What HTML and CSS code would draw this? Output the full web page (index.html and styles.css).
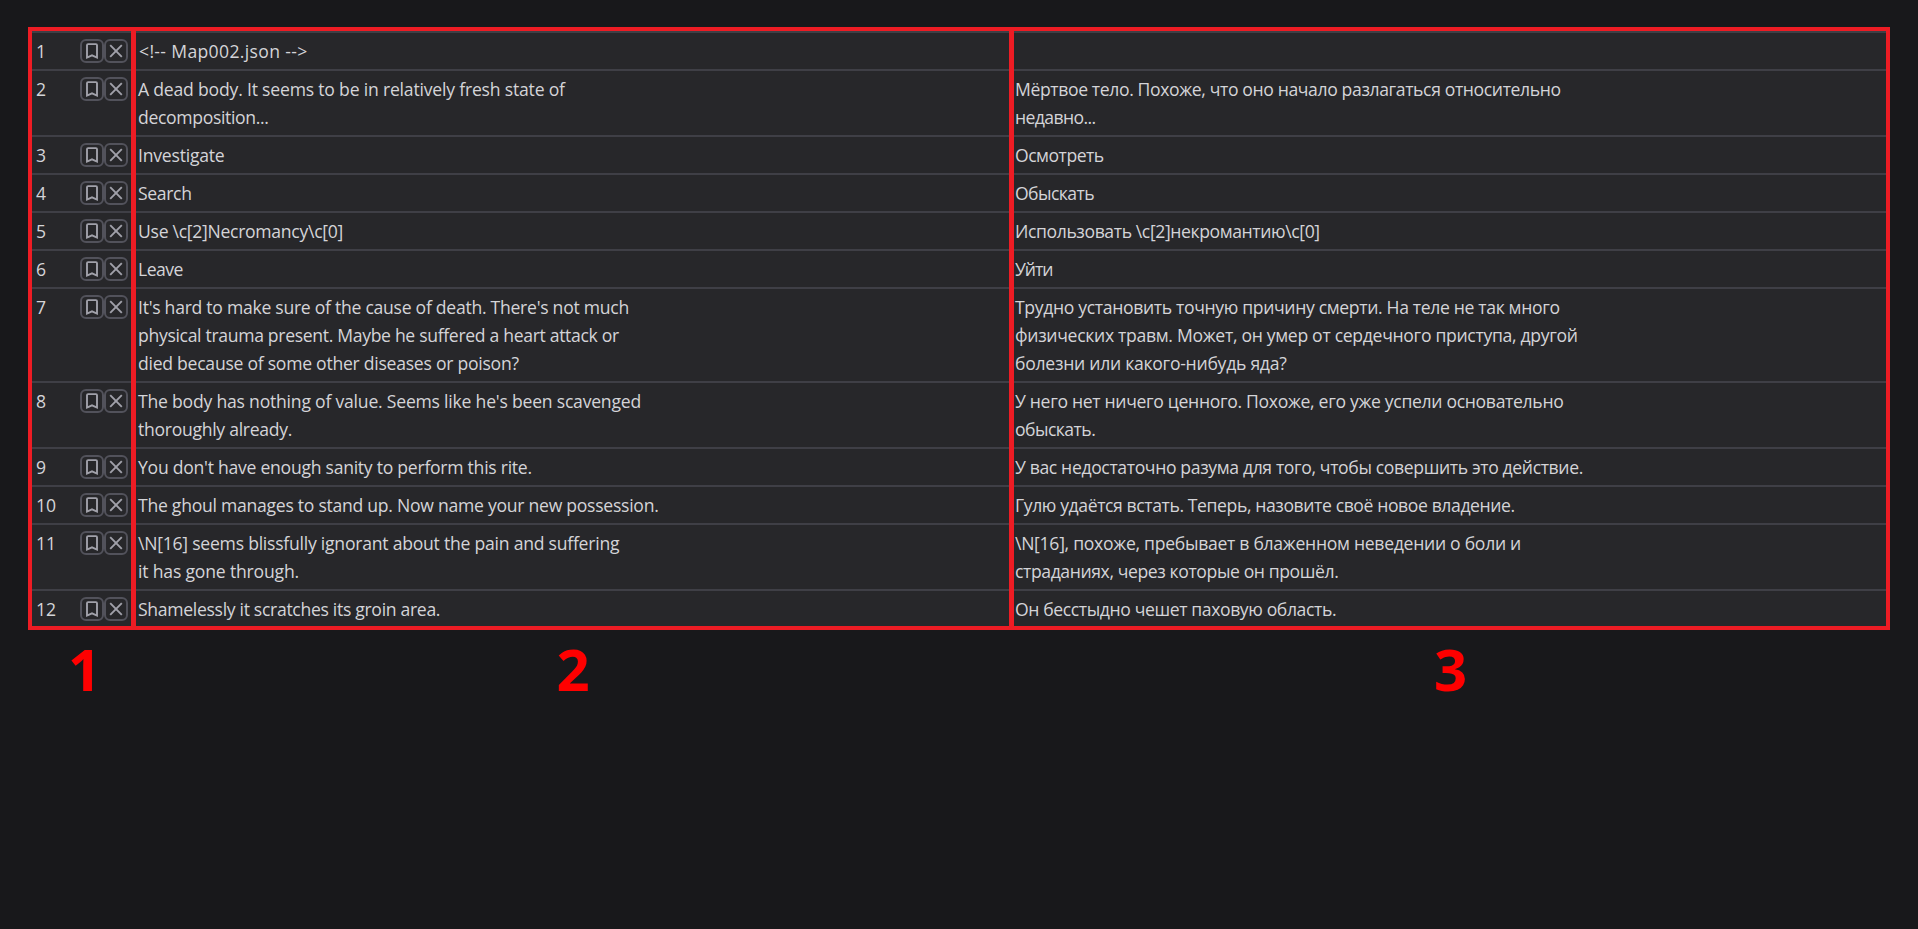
FILE: index.html
```html
<!DOCTYPE html>
<html lang="en">
<head>
<meta charset="utf-8">
<title>Map002</title>
<link rel="stylesheet" href="styles.css">
</head>
<body>
<main class="table" id="table"></main>
<footer class="legend"><span>1</span><span>2</span><span>3</span></footer>
<script src="rows.js"></script>
</body>
</html>
```
FILE: styles.css
```css
body {
  margin: 0;
  padding: 27px 28px 0;
  background: #18181b;
  color: #d4d4d8;
  font-family: "Open Sans", "Noto Sans", sans-serif;
}

.table {
  box-sizing: border-box;
  height: 603px;
  overflow: hidden;
  border: 4px solid #ed1c24;
  background: #27272a;
}

.row,
.legend {
  display: grid;
  grid-template-columns: 99px 878px 877px;
}

.cell {
  box-shadow: inset 0 2px #3f3f46;
  padding: 6px 0 4px 2px;
  font-size: 17.6px;
  line-height: 28px;
}

.cell + .cell {
  border-left: 5px solid #ed1c24;
}

.cell:last-child {
  padding-left: 1px;
}

.row:first-child .cell + .cell {
  padding-left: 3px;
}

.cell.meta {
  display: flex;
  align-items: flex-start;
  padding: 6px 3px 4px 4px;
}

.num {
  flex: 1;
}

.button {
  box-sizing: border-box;
  width: 24px;
  height: 24px;
  margin-top: 2px;
  padding: 0;
  border: 2px solid #52525b;
  border-radius: 6px;
  background: none;
  display: flex;
  align-items: center;
  justify-content: center;
}

.icon {
  display: block;
  width: 20px;
  height: 20px;
  fill: none;
  stroke: #a1a1aa;
  stroke-width: 1.9;
}

.line {
  display: block;
  width: max-content;
  white-space: pre;
}

.legend {
  padding: 0 1px 0 7px;
  color: #f00;
  font-size: 58px;
  font-weight: 700;
  line-height: 78px;
  text-align: center;
}
```
FILE: rows.js
```
// Each line: [text, drawn width in px]
const rows = [
  [[["<!-- Map002.json -->", 168.2]], []],
  [[["A dead body. It seems to be in relatively fresh state of", 427], ["decomposition...", 131]],
   [["Мёртвое тело. Похоже, что оно начало разлагаться относительно", 546.1], ["недавно...", 81.2]]],
  [[["Investigate", 86.7]], [["Осмотреть", 89.2]]],
  [[["Search", 54]], [["Обыскать", 79.7]]],
  [[["Use \\c[2]Necromancy\\c[0]", 205.3]], [["Использовать \\c[2]некромантию\\c[0]", 305.1]]],
  [[["Leave", 45.5]], [["Уйти", 38.4]]],
  [[["It's hard to make sure of the cause of death. There's not much", 491.2],
    ["physical trauma present. Maybe he suffered a heart attack or", 481.2],
    ["died because of some other diseases or poison?", 381]],
   [["Трудно установить точную причину смерти. На теле не так много", 545],
    ["физических травм. Может, он умер от сердечного приступа, другой", 563],
    ["болезни или какого-нибудь яда?", 271.8]]],
  [[["The body has nothing of value. Seems like he's been scavenged", 503.2], ["thoroughly already.", 154.4]],
   [["У него нет ничего ценного. Похоже, его уже успели основательно", 548.8], ["обыскать.", 80.8]]],
  [[["You don't have enough sanity to perform this rite.", 394.1]],
   [["У вас недостаточно разума для того, чтобы совершить это действие.", 568.3]]],
  [[["The ghoul manages to stand up. Now name your new possession.", 520.8]],
   [["Гулю удаётся встать. Теперь, назовите своё новое владение.", 500.2]]],
  [[["\\N[16] seems blissfully ignorant about the pain and suffering", 481.5], ["it has gone through.", 161.2]],
   [["\\N[16], похоже, пребывает в блаженном неведении о боли и", 506.3], ["страданиях, через которые он прошёл.", 323.8]]],
  [[["Shamelessly it scratches its groin area.", 302.5]], [["Он бесстыдно чешет паховую область.", 321.5]]]
];

const icon = (d) =>
  `<button class="button"><svg class="icon" viewBox="0 0 20 20"><path d="${d}"/></svg></button>`;

const cell = (lines) =>
  `<div class="cell">${lines.map(([text, width]) =>
    `<span class="line" data-width="${width}">${text.replace(/</g, "&lt;")}</span>`).join("")}</div>`;

document.getElementById("table").innerHTML = rows.map(([source, translation], i) =>
  `<div class="row"><div class="cell meta"><span class="num">${i + 1}</span>` +
  icon("M5 16.6V4.2q0-1.1 1.1-1.1h7.8q1.1 0 1.1 1.1v12.4l-5-2.3z") +
  icon("M4.2 4.2l11.6 11.6M15.8 4.2l-11.6 11.6") +
  `</div>${cell(source)}${cell(translation)}</div>`).join("");

// Spread each line's letters evenly to its drawn width.
document.querySelectorAll(".line").forEach((el) => {
  const natural = el.getBoundingClientRect().width;
  const gaps = el.textContent.length - 1;
  el.style.letterSpacing = `${(el.dataset.width - natural) / gaps}px`;
});
```
